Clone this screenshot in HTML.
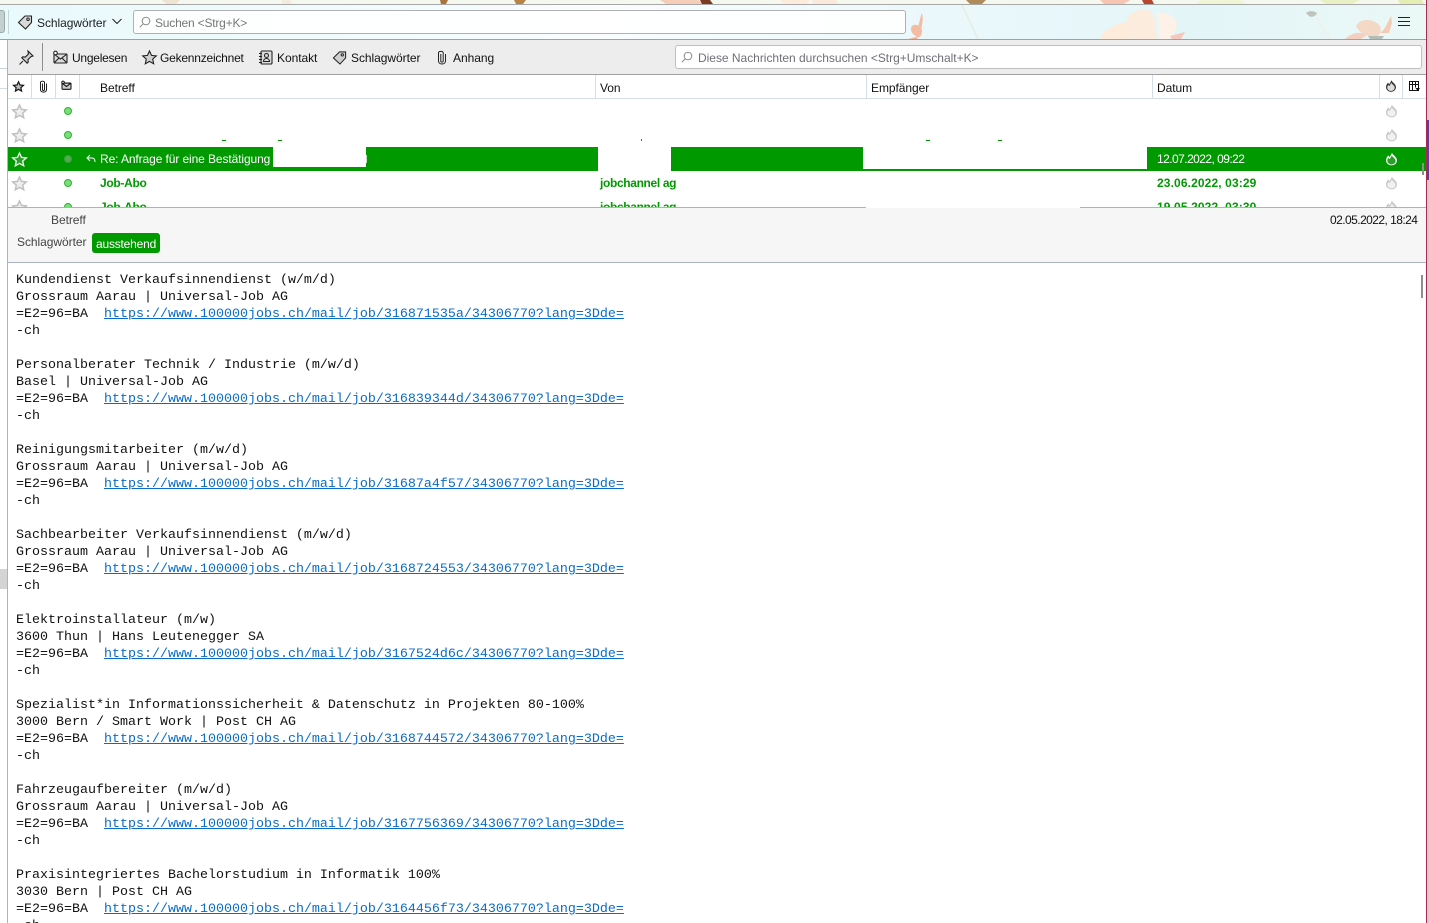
<!DOCTYPE html>
<html lang="de"><head><meta charset="utf-8"><title>Mail</title>
<style>
html,body{margin:0;padding:0;width:1429px;height:923px;overflow:hidden;background:#fff}
body{position:relative;font-family:"Liberation Sans",sans-serif;font-size:12px;color:#111}
.a{position:absolute}
.t{position:absolute;white-space:nowrap;line-height:16px;letter-spacing:-.05px}
svg{position:absolute;overflow:visible}
.sep{position:absolute;background:#d5dde8;width:1px;top:75px;height:23px}
.g{color:#090;font-weight:bold}
.body{position:absolute;left:16px;top:272px;font:13.33px/17px "Liberation Mono",monospace;white-space:pre;color:#111}
.body a{color:#0a6cc8;text-decoration:underline}
.w{position:absolute;background:#fff}
</style></head><body>

<!-- banner -->
<div class="a" style="left:0;top:0;width:1429px;height:39px;background:linear-gradient(90deg,#e9fafc 0,#f0fbfd 300px,#f9fdfe 600px,#eaf8fb 950px,#e4f5f8 1200px,#eaf8f6 1429px);overflow:hidden"></div>
<svg style="left:0;top:0" width="1429" height="39" viewBox="0 0 1429 39">
<rect x="0" y="0" width="1429" height="4" fill="#f4f8ee"/>
<path d="M162 0h18l-4 4h-10z" fill="#efe3d2"/>
<path d="M282 0h8l2 4h-10z" fill="#f3ecdc"/>
<path d="M440 0h8l-2 4h-5z" fill="#a8733c"/>
<path d="M514 0h12l-3 4h-7z" fill="#b98247"/>
<path d="M660 0h38l6 4h-38z" fill="#f6cdb9"/>
<path d="M700 0h10l3 4h-11z" fill="#7c3a20"/>
<path d="M780 0h30l-4 4h-22z" fill="#fcecdc"/>
<path d="M812 0h24l3 4h-26z" fill="#fbeadb"/>
<path d="M966 0h20l-4 4h-12z" fill="#b08a58"/>
<path d="M1100 0h30l-6 4h-20z" fill="#f6c6b2"/>
<path d="M1142 0h10l2 4h-10z" fill="#b5482c"/>
<path d="M1200 0h40l6 4h-50z" fill="#f0f5d6"/>
<path d="M1320 0h40l-8 4h-26z" fill="#e9f1c4"/>
<path d="M1398 0h24l2 4h-24z" fill="#e4edb4"/>
<!-- small flower by search -->
<path d="M922 13c2 7-1 19-4 25l-2-1c2-6 3-17 6-24z" fill="#f3bb9f"/>
<path d="M921 28c-4-5-10-4-10 1 0 5 5 8 9 8 2-3 3-7 1-9z" fill="#f4bca2"/>
<path d="M918 39h-10l8-2z" fill="#f2b196"/>
<path d="M962 5l16 34" stroke="#e6eee0" stroke-width="1.500" fill="none"/>
<!-- big flower -->
<path d="M1100 39c2-8 14-15 26-17 5 6 2 14 2 17z" fill="#fcecd9"/>
<path d="M1127 22c-2-6 8-13 20-13 8 2 9 18 10 30h-28c-2-6-3-12-2-17z" fill="#fcecdd"/>
<path d="M1157 13c6-2 15 1 20 10 0 6-4 12-8 16h-10c0-8 0-18-2-26z" fill="#fdf1e8"/>
<path d="M1170 36l15-4-4 7h-9z" fill="#f6c8bb"/>
<!-- flower right -->
<path d="M1345 39c6-6 16-8 22-4l-6 4z" fill="#f3d0c0"/>
<path d="M1356 26c4-8 18-8 24 0 2 4 0 8-2 10h-10c-5-2-10-5-12-10z" fill="#f4d8c6"/>
<path d="M1380 33c6-4 8-12 11-17l1 7-3 10z" fill="#f4cbb5"/>
<path d="M1368 36h16l-2 3h-12z" fill="#b3bdb5"/>
<path d="M1306 13c3-3 8-2 11 0-1 3-5 5-8 3z" fill="#b5b6ad" opacity=".8"/>
<path d="M1316 17l14 22" stroke="#eef2ea" stroke-width="2" fill="none"/>
</svg>
<div class="a" style="left:0;top:4px;width:1429px;height:1px;background:#a8a8a8"></div>
<div class="a" style="left:0;top:39px;width:1429px;height:1px;background:#a0a0a0"></div>
<!-- left button -->
<div class="a" style="left:-4px;top:10px;width:9px;height:23px;background:#c4d0d0;border:1px solid #9aa;border-radius:3px;box-sizing:border-box"></div>
<div class="a" style="left:8px;top:10px;width:1px;height:24px;background:#c5d6da"></div>
<svg style="left:17px;top:14px" width="16" height="16" viewBox="0 0 16 16" fill="none" stroke="#222" stroke-width="1.100"><path d="M1.500 8.500L8 2h6.500v6.500L8.500 15z" fill="#d9d9d9"/><circle cx="11" cy="5.200" r="1.200" fill="#fff"/></svg>
<div class="t" style="left:37px;top:15px;color:#222">Schlagwörter</div>
<svg style="left:112px;top:18px" width="10" height="7" viewBox="0 0 10 7" fill="none" stroke="#222" stroke-width="1"><path d="M.5 1l4.500 4.500L9.500 1"/></svg>
<div class="a" style="left:133px;top:10px;width:773px;height:24px;box-sizing:border-box;background:rgba(255,255,255,.88);border:1px solid #b0b0b0;border-radius:3px"></div>
<svg style="left:139px;top:16px" width="12" height="12" viewBox="0 0 12 12" fill="none" stroke="#888" stroke-width="1"><circle cx="7" cy="5" r="3.800"/><path d="M4.300 7.700L.8 11.200"/></svg>
<div class="t" style="left:155px;top:15px;color:#777;letter-spacing:-.2px">Suchen &lt;Strg+K&gt;</div>
<div class="a" style="left:1398px;top:17px;width:12px;height:1px;background:#222"></div>
<div class="a" style="left:1398px;top:21px;width:12px;height:1px;background:#222"></div>
<div class="a" style="left:1398px;top:25px;width:12px;height:1px;background:#222"></div>

<!-- left col -->
<div class="a" style="left:0;top:40px;width:7px;height:883px;background:#fff"></div>
<div class="a" style="left:0;top:68px;width:7px;height:1px;background:#c8d0dc"></div>
<div class="a" style="left:0;top:88px;width:7px;height:1px;background:#d5dde8"></div>
<div class="a" style="left:0;top:569px;width:7px;height:20px;background:#d4d4d4"></div>
<div class="a" style="left:7px;top:40px;width:1px;height:883px;background:#a9b4c0"></div>

<!-- quick filter toolbar -->
<div class="a" style="left:8px;top:40px;width:1418px;height:34px;background:#ededed"></div>
<div class="a" style="left:8px;top:74px;width:1418px;height:1px;background:#a0a0a0"></div>
<svg style="left:18px;top:50px" width="16" height="16" viewBox="0 0 16 16" fill="#d0d0d0" stroke="#222" stroke-width="1.100"><path d="M10 1l5 5-2 .6-3 3 .2 2.600-1 1-5.400-5.400 1-1 2.600.2 3-3z"/><path d="M5 11L1.500 14.500" fill="none"/></svg>
<div class="a" style="left:42px;top:43px;width:1px;height:28px;background:#8f8f8f"></div>
<svg style="left:53px;top:51px" width="15" height="13" viewBox="0 0 15 13" fill="#ddd" stroke="#222" stroke-width="1.100"><rect x="1" y="3" width="13" height="9" rx="1"/><path d="M1 3l6.500 5L14 3M1 12l5-5M14 12L9 7" fill="none"/><circle cx="2.500" cy="2" r="1.800" fill="#fff"/></svg>
<div class="t" style="left:72px;top:50px;letter-spacing:-.25px">Ungelesen</div>
<svg style="left:142px;top:50px" width="15" height="15" viewBox="0 0 15 15" fill="#cfcfcf" stroke="#222" stroke-width="1.100"><path d="M7.500 1l2 4.400 4.800.5-3.600 3.200 1 4.700-4.200-2.400-4.200 2.400 1-4.700L.7 5.900l4.800-.5z"/></svg>
<div class="t" style="left:160px;top:50px;letter-spacing:-.22px">Gekennzeichnet</div>
<svg style="left:259px;top:50px" width="14" height="15" viewBox="0 0 14 15" fill="none" stroke="#222" stroke-width="1.100"><rect x="2" y="1" width="11" height="13" rx="1" fill="#ddd"/><path d="M0 3.500h3M0 6.500h3M0 9.500h3M0 12.500h3"/><circle cx="7.500" cy="5.500" r="2"/><path d="M4.500 11.500c0-4 6-4 6 0z"/></svg>
<div class="t" style="left:277px;top:50px">Kontakt</div>
<svg style="left:332px;top:50px" width="15" height="15" viewBox="0 0 16 16" fill="#cfcfcf" stroke="#222" stroke-width="1.100"><path d="M1.500 8.500L8 2h6.500v6.500L8.500 15z"/><circle cx="11" cy="5.200" r="1.200" fill="#fff"/></svg>
<div class="t" style="left:351px;top:50px">Schlagwörter</div>
<svg style="left:437px;top:50px" width="10" height="15" viewBox="0 0 10 15" fill="none" stroke="#222" stroke-width="1"><path d="M3.800 4v7c0 1.500 2.400 1.500 2.400 0V3C6.200.8 1.500.8 1.500 3v8c0 4 7 4 7 0V4"/></svg>
<div class="t" style="left:453px;top:50px">Anhang</div>
<div class="a" style="left:675px;top:45px;width:747px;height:24px;box-sizing:border-box;background:#fff;border:1px solid #c0c0c0;border-radius:3px"></div>
<svg style="left:681px;top:51px" width="12" height="12" viewBox="0 0 12 12" fill="none" stroke="#888" stroke-width="1"><circle cx="7" cy="5" r="3.800"/><path d="M4.300 7.700L.8 11.200"/></svg>
<div class="t" style="left:698px;top:50px;color:#6f6f78;letter-spacing:-.02px">Diese Nachrichten durchsuchen &lt;Strg+Umschalt+K&gt;</div>

<!-- column headers -->
<div class="a" style="left:8px;top:98px;width:1418px;height:1px;background:#d5dde8"></div>
<div class="sep" style="left:31px"></div><div class="sep" style="left:55px"></div><div class="sep" style="left:79px"></div>
<div class="sep" style="left:595px"></div><div class="sep" style="left:866px"></div><div class="sep" style="left:1152px"></div><div class="sep" style="left:1379px"></div><div class="sep" style="left:1402px"></div>
<svg style="left:13px;top:81px" width="11" height="11" viewBox="0 0 15 15" fill="#bbb" stroke="#111" stroke-width="1.600"><path d="M7.500 1l2 4.400 4.800.5-3.600 3.200 1 4.700-4.200-2.400-4.200 2.400 1-4.700L.7 5.900l4.800-.5z"/></svg>
<svg style="left:39px;top:80px" width="9" height="13" viewBox="0 0 10 15" fill="none" stroke="#111" stroke-width="1.100"><path d="M3.800 4v7c0 1.500 2.400 1.500 2.400 0V3C6.200.8 1.500.8 1.500 3v8c0 4 7 4 7 0V4"/></svg>
<svg style="left:61px;top:81px" width="11" height="9" viewBox="0 0 15 13" fill="#ccc" stroke="#111" stroke-width="1.500"><rect x="1" y="3" width="13" height="9" rx="1"/><path d="M1 3l6.500 5L14 3" fill="none"/><circle cx="2.500" cy="2" r="1.800" fill="#fff"/></svg>
<div class="t" style="left:100px;top:80px">Betreff</div>
<div class="t" style="left:600px;top:80px">Von</div>
<div class="t" style="left:871px;top:80px">Empfänger</div>
<div class="t" style="left:1157px;top:80px">Datum</div>
<svg style="left:1386px;top:80px" width="10" height="12" viewBox="0 0 12 14" fill="#333"><use href="#fl"/><use href="#fi" fill="#ddd"/></svg>
<svg style="left:1409px;top:81px" width="11" height="11" viewBox="0 0 11 11" fill="none" stroke="#111" stroke-width="1"><rect x=".5" y=".5" width="9" height="9"/><path d="M.5 3.500h9M3.500 .5v9M6.500 .5v6"/><path d="M6.500 7h4.500l-2.200 3z" fill="#111" stroke="none"/></svg>

<!-- rows -->
<svg width="0" height="0"><defs>
<path id="st" d="M7.500 1l2 4.400 4.800.5-3.600 3.200 1 4.700-4.200-2.400-4.200 2.400 1-4.700L.7 5.900l4.800-.5z"/>
<path id="fl" d="M6.500 0c.5 2.500 5.500 4.500 5.500 8.500A6 5.500 0 0 1 0 8.500C0 6 1.200 4.500 2.500 3l1.200 2C4.800 3.500 5.800 2 6.500 0z"/>
<path id="fi" d="M6.300 3c.5 1.800 4.200 3.500 4.200 6a4.500 4 0 0 1-9 0c0-1.400.8-2.600 1.400-3.300l1 1.500C4.800 6 5.700 4.500 6.300 3z"/>
</defs></svg>
<div class="a" style="left:8px;top:147px;width:1418px;height:24px;background:#090"></div>

<svg style="left:12px;top:104px" width="15" height="15" viewBox="0 0 15 15" fill="#eee" stroke="#c0c0c0" stroke-width="1.500"><use href="#st"/></svg>
<svg style="left:12px;top:128px" width="15" height="15" viewBox="0 0 15 15" fill="#eee" stroke="#c0c0c0" stroke-width="1.500"><use href="#st"/></svg>
<svg style="left:12px;top:152px" width="15" height="15" viewBox="0 0 15 15" fill="#2a9f2a" stroke="#e8f5e8" stroke-width="1.400"><use href="#st"/></svg>
<svg style="left:12px;top:176px" width="15" height="15" viewBox="0 0 15 15" fill="#eee" stroke="#c0c0c0" stroke-width="1.500"><use href="#st"/></svg>
<div class="a" style="left:64px;top:107px;width:8px;height:8px;border-radius:50%;background:#7ddc7d;border:1px solid #2cb52c;box-sizing:border-box"></div>
<div class="a" style="left:64px;top:131px;width:8px;height:8px;border-radius:50%;background:#7ddc7d;border:1px solid #2cb52c;box-sizing:border-box"></div>
<div class="a" style="left:64px;top:155px;width:8px;height:8px;border-radius:50%;background:#4cae4c;border:1px solid #3f9f3f;box-sizing:border-box"></div>
<div class="a" style="left:64px;top:179px;width:8px;height:8px;border-radius:50%;background:#7ddc7d;border:1px solid #2cb52c;box-sizing:border-box"></div>
<svg style="left:86px;top:154px" width="10" height="9" viewBox="0 0 10 9" fill="none" stroke="#fff" stroke-width="1"><path d="M4 1L1 4l3 3M1 4h5c2 0 3 1.500 3 4"/></svg>
<div class="t" style="left:100px;top:151px;color:#fff;letter-spacing:-.1px">Re: Anfrage für eine Bestätigung</div>
<div class="w" style="left:273px;top:147px;width:93px;height:20px"></div>
<div class="w" style="left:598px;top:147px;width:73px;height:24px"></div>
<div class="w" style="left:863px;top:147px;width:284px;height:22px"></div>
<div class="t" style="left:1157px;top:151px;color:#fff;letter-spacing:-.55px">12.07.2022, 09:22</div>

<div class="t g" style="left:100px;top:175px;letter-spacing:-.3px">Job-Abo</div>
<div class="t g" style="left:600px;top:175px;letter-spacing:-.35px">jobchannel ag</div>
<div class="t g" style="left:1157px;top:175px;letter-spacing:.12px">23.06.2022, 03:29</div>

<svg style="left:1386px;top:104px" width="11" height="14" viewBox="0 0 12 14" fill="#c8c8c8"><use href="#fl"/><use href="#fi" fill="#f0f0f0"/></svg>
<svg style="left:1386px;top:128px" width="11" height="14" viewBox="0 0 12 14" fill="#c8c8c8"><use href="#fl"/><use href="#fi" fill="#f0f0f0"/></svg>
<svg style="left:1386px;top:152px" width="11" height="14" viewBox="0 0 12 14" fill="#f0f8f0"><use href="#fl"/><use href="#fi" fill="#2a9f2a"/></svg>
<svg style="left:1386px;top:176px" width="11" height="14" viewBox="0 0 12 14" fill="#c8c8c8"><use href="#fl"/><use href="#fi" fill="#f0f0f0"/></svg>

<!-- descender bits row 2 -->
<div class="a" style="left:222px;top:140px;width:4px;height:1px;background:#090"></div>
<div class="a" style="left:278px;top:140px;width:4px;height:1px;background:#090"></div>
<div class="a" style="left:641px;top:139px;width:1px;height:2px;background:#090"></div>
<div class="a" style="left:926px;top:140px;width:4px;height:1px;background:#090"></div>
<div class="a" style="left:998px;top:140px;width:4px;height:1px;background:#090"></div>
<div class="a" style="left:366px;top:155px;width:1px;height:8px;background:#bfe3bf"></div>

<!-- row 5 clipped -->
<div class="a" style="left:8px;top:195px;width:1418px;height:12px;overflow:hidden;background:#fff">
<svg style="left:4px;top:5px" width="15" height="15" viewBox="0 0 15 15" fill="#eee" stroke="#c0c0c0" stroke-width="1.500"><use href="#st"/></svg>
<div class="a" style="left:56px;top:8px;width:8px;height:8px;border-radius:50%;background:#7ddc7d;border:1px solid #2cb52c;box-sizing:border-box"></div>
<div class="t g" style="left:92px;top:4px;letter-spacing:-.3px">Job-Abo</div>
<div class="t g" style="left:592px;top:4px;letter-spacing:-.35px">jobchannel ag</div>
<div class="t g" style="left:1149px;top:4px;letter-spacing:.12px">19.05.2022, 03:30</div>
<svg style="left:1378px;top:5px" width="11" height="14" viewBox="0 0 12 14" fill="#c8c8c8"><use href="#fl"/><use href="#fi" fill="#f0f0f0"/></svg>
</div>

<!-- message header -->
<div class="a" style="left:8px;top:207px;width:1418px;height:1px;background:#a9b4c0"></div>
<div class="w" style="left:866px;top:207px;width:214px;height:1px"></div>
<div class="a" style="left:8px;top:208px;width:1418px;height:54px;background:#f6f6f6"></div>
<div class="a" style="left:8px;top:262px;width:1418px;height:1px;background:#a9b4c0"></div>
<div class="t" style="left:51px;top:212px;color:#444">Betreff</div>
<div class="t" style="left:1330px;top:212px;color:#111;letter-spacing:-.55px">02.05.2022, 18:24</div>
<div class="t" style="left:17px;top:234px;color:#444">Schlagwörter</div>
<div class="a" style="left:92px;top:233px;width:68px;height:20px;background:#090;border-radius:3px"></div>
<div class="t" style="left:96px;top:236px;color:#fff;letter-spacing:-.2px">ausstehend</div>

<!-- body -->
<div class="body">Kundendienst Verkaufsinnendienst (w/m/d)
Grossraum Aarau | Universal-Job AG
=E2=96=BA  <a>https://www.100000jobs.ch/mail/job/316871535a/34306770?lang=3Dde=</a>
-ch

Personalberater Technik / Industrie (m/w/d)
Basel | Universal-Job AG
=E2=96=BA  <a>https://www.100000jobs.ch/mail/job/316839344d/34306770?lang=3Dde=</a>
-ch

Reinigungsmitarbeiter (m/w/d)
Grossraum Aarau | Universal-Job AG
=E2=96=BA  <a>https://www.100000jobs.ch/mail/job/31687a4f57/34306770?lang=3Dde=</a>
-ch

Sachbearbeiter Verkaufsinnendienst (m/w/d)
Grossraum Aarau | Universal-Job AG
=E2=96=BA  <a>https://www.100000jobs.ch/mail/job/3168724553/34306770?lang=3Dde=</a>
-ch

Elektroinstallateur (m/w)
3600 Thun | Hans Leutenegger SA
=E2=96=BA  <a>https://www.100000jobs.ch/mail/job/3167524d6c/34306770?lang=3Dde=</a>
-ch

Spezialist*in Informationssicherheit &amp; Datenschutz in Projekten 80-100%
3000 Bern / Smart Work | Post CH AG
=E2=96=BA  <a>https://www.100000jobs.ch/mail/job/3168744572/34306770?lang=3Dde=</a>
-ch

Fahrzeugaufbereiter (m/w/d)
Grossraum Aarau | Universal-Job AG
=E2=96=BA  <a>https://www.100000jobs.ch/mail/job/3167756369/34306770?lang=3Dde=</a>
-ch

Praxisintegriertes Bachelorstudium in Informatik 100%
3030 Bern | Post CH AG
=E2=96=BA  <a>https://www.100000jobs.ch/mail/job/3164456f73/34306770?lang=3Dde=</a>
-ch</div>

<!-- scrollbars + right edge -->
<div class="a" style="left:1421px;top:275px;width:2px;height:23px;background:#8f8f8f"></div>
<div class="a" style="left:1422px;top:163px;width:2px;height:12px;background:#8f8f8f"></div>
<div class="a" style="left:1426px;top:0;width:1px;height:923px;background:#b0284f"></div>
<div class="a" style="left:1427px;top:0;width:2px;height:923px;background:#cfcfcf"></div>
<div class="a" style="left:1427px;top:120px;width:2px;height:60px;background:#5a3fa0"></div>
</body></html>
